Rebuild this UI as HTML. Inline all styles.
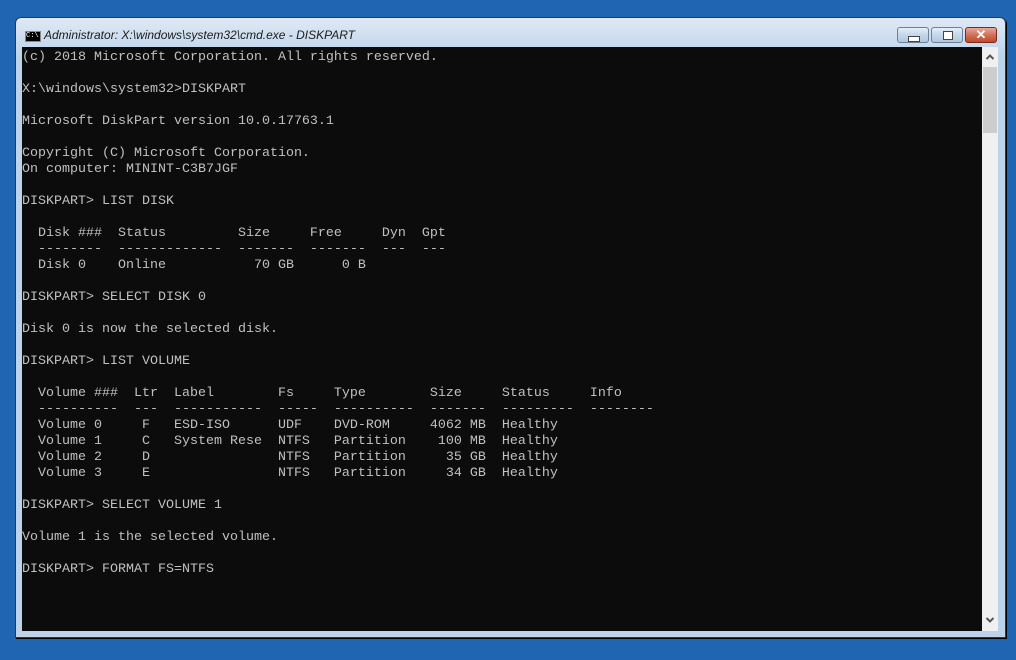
<!DOCTYPE html>
<html><head><style>
body{margin:0;width:1016px;height:660px;background:#1f65b1;position:relative;overflow:hidden;font-family:"Liberation Sans",sans-serif}
.win{position:absolute;left:15px;top:17px;width:991px;height:621px;background:linear-gradient(#dfe9f5,#bcd3ea 40px,#bcd3ea);border:1px solid #2a3a4a;border-radius:6px 6px 0 0;box-sizing:border-box;box-shadow:1px 1px 0 #000}
.title{position:absolute;left:44px;top:28px;font-size:12px;font-style:italic;color:#1b1b1b}
.ico{position:absolute;left:25px;top:31px;width:14px;height:9px;background:#000;border:1px solid #888;color:#fff;font:7px "Liberation Mono",monospace;line-height:9px}
.btn{position:absolute;top:27px;height:16px;border:1px solid #6c7f96;border-radius:3px;background:linear-gradient(#e6eef8,#c4d6ea 50%,#b0c6de);box-sizing:border-box}
.con{position:absolute;left:22px;top:47px;width:960px;height:584px;background:#0c0c0c}
pre{margin:0;position:absolute;left:22px;top:50px;font:13.33px/16px "Liberation Mono",monospace;color:#c0c0c0}
.sb{position:absolute;left:982px;top:47px;width:16px;height:584px;background:#f0f0f0}
.th{position:absolute;left:983px;top:67px;width:14px;height:66px;background:#cdcdcd}
</style></head><body>
<div class="win"></div>
<div class="ico">C:\</div>
<div class="title">Administrator: X:\windows\system32\cmd.exe - DISKPART</div>
<div class="btn" style="left:897px;width:32px"><div style="position:absolute;left:10px;top:8px;width:10px;height:4px;background:#fff;border:1px solid #444"></div></div>
<div class="btn" style="left:931px;width:32px"><div style="position:absolute;left:11px;top:3px;width:8px;height:7px;background:#fff;border:1px solid #444"></div></div>
<div class="btn" style="left:965px;width:32px;background:linear-gradient(#e9a898,#d0705a 50%,#c04a2a);border-color:#7a2a1a;color:#fff;font-weight:bold;font-size:13px;text-align:center;line-height:14px">✕</div>
<div class="con"></div>
<div class="sb">
<svg style="position:absolute;left:4px;top:7px" width="8" height="6"><path d="M0.5 5 L4 1.5 L7.5 5" stroke="#555" stroke-width="2" fill="none"/></svg>
<svg style="position:absolute;left:4px;top:570px" width="8" height="6"><path d="M0.5 1 L4 4.5 L7.5 1" stroke="#555" stroke-width="2" fill="none"/></svg>
</div>
<div class="th"></div>
<pre>(c) 2018 Microsoft Corporation. All rights reserved.

X:\windows\system32>DISKPART

Microsoft DiskPart version 10.0.17763.1

Copyright (C) Microsoft Corporation.
On computer: MININT-C3B7JGF

DISKPART> LIST DISK

  Disk ###  Status         Size     Free     Dyn  Gpt
  --------  -------------  -------  -------  ---  ---
  Disk 0    Online           70 GB      0 B

DISKPART> SELECT DISK 0

Disk 0 is now the selected disk.

DISKPART> LIST VOLUME

  Volume ###  Ltr  Label        Fs     Type        Size     Status     Info
  ----------  ---  -----------  -----  ----------  -------  ---------  --------
  Volume 0     F   ESD-ISO      UDF    DVD-ROM     4062 MB  Healthy
  Volume 1     C   System Rese  NTFS   Partition    100 MB  Healthy
  Volume 2     D                NTFS   Partition     35 GB  Healthy
  Volume 3     E                NTFS   Partition     34 GB  Healthy

DISKPART> SELECT VOLUME 1

Volume 1 is the selected volume.

DISKPART> FORMAT FS=NTFS
</pre>
</body></html>
